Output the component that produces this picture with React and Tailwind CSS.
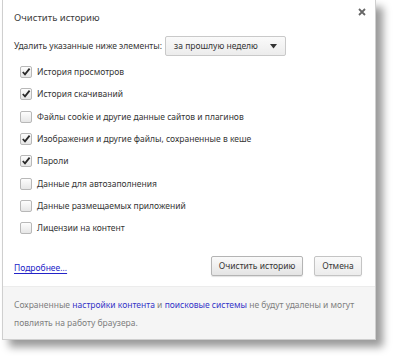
import React from "react";

const items = [
  { label: "История просмотров", checked: true },
  { label: "История скачиваний", checked: true },
  { label: "Файлы cookie и другие данные сайтов и плагинов", checked: false },
  { label: "Изображения и другие файлы, сохраненные в кеше", checked: true },
  { label: "Пароли", checked: true },
  { label: "Данные для автозаполнения", checked: false },
  { label: "Данные размещаемых приложений", checked: false },
  { label: "Лицензии на контент", checked: false },
];

const Checkbox = ({ checked }) => (
  <span className="w-[12px] h-[12px] rounded-[2px] border border-[#b8b8b8] bg-gradient-to-b from-[#fdfdfd] to-[#e6e6e6] flex items-center justify-center shrink-0">
    {checked && (
      <svg width="10" height="10" viewBox="0 0 10 10">
        <path d="M1.8 5 L4 7.4 L8.6 1.6" fill="none" stroke="#2a2a2a" strokeWidth="1.8" />
      </svg>
    )}
  </span>
);

const App = () => {
  return (
    <div className="w-[393px] h-[356px] bg-white font-['Noto_Sans',sans-serif] text-[8.5px] leading-[12px] text-[#363636] pl-[2px]">
      {/* Dialog */}
      <div className="w-[374px] h-[340px] bg-white border border-[#cfcfcf] border-t-0 flex flex-col shadow-[7px_7px_8px_rgba(0,0,0,0.4)]">
        {/* Header */}
        <div className="flex items-start justify-between pl-[11px] pr-[9px] pt-[11px]">
          <h1 className="text-[9.5px] leading-[14px] text-[#3c3c3c]">Очистить историю</h1>
          <svg width="8" height="8" viewBox="0 0 8 8" className="-mt-[3px]">
            <path d="M1 1 L7 7 M7 1 L1 7" stroke="#666" strokeWidth="1.8" />
          </svg>
        </div>

        {/* Time range */}
        <div className="flex items-center pl-[11px] mt-[11px]">
          <span>Удалить указанные ниже элементы:</span>
          <div className="ml-[3px] w-[121px] h-[20px] border border-[#c9c9c9] rounded-[2px] bg-gradient-to-b from-[#fafafa] to-[#ececec] flex items-center justify-between pl-[8px] pr-[8px]">
            <span>за прошлую неделю</span>
            <svg width="7" height="5" viewBox="0 0 7 5">
              <path d="M0 0 H7 L3.5 4.5 Z" fill="#333" />
            </svg>
          </div>
        </div>

        {/* Checkboxes */}
        <div className="flex flex-col pl-[17px] mt-[5px]">
          {items.map((it) => (
            <label key={it.label} className="flex items-center gap-[5px] h-[22.3px]">
              <Checkbox checked={it.checked} />
              <span>{it.label}</span>
            </label>
          ))}
        </div>

        {/* Actions */}
        <div className="flex items-center justify-between pl-[11px] pr-[13px] mt-[17px]">
          <a className="text-[#2323c8] underline underline-offset-2 mt-[3px]">Подробнее...</a>
          <div className="flex gap-[11px]">
            <button className="h-[20px] w-[92px] border border-[#b4b4b4] rounded-[2px] bg-gradient-to-b from-[#fafafa] to-[#e4e4e4] shadow-[0_1px_1px_rgba(0,0,0,0.12)]">
              Очистить историю
            </button>
            <button className="h-[20px] w-[48px] border border-[#c4c4c4] rounded-[2px] bg-gradient-to-b from-[#fafafa] to-[#ececec] shadow-[0_1px_1px_rgba(0,0,0,0.08)]">
              Отмена
            </button>
          </div>
        </div>

        {/* Footer */}
        <div className="mt-auto h-[53px] bg-[#f5f5f5] border-t border-[#ececec] pl-[11px] pt-[12px] text-[#808080] flex flex-col gap-[6px]">
          <p>
            Сохраненные <span className="text-[#3535c8]">настройки контента</span> и{" "}
            <span className="text-[#3535c8]">поисковые системы</span> не будут удалены и могут
          </p>
          <p>повлиять на работу браузера.</p>
        </div>
      </div>
    </div>
  );
};

export default App;
